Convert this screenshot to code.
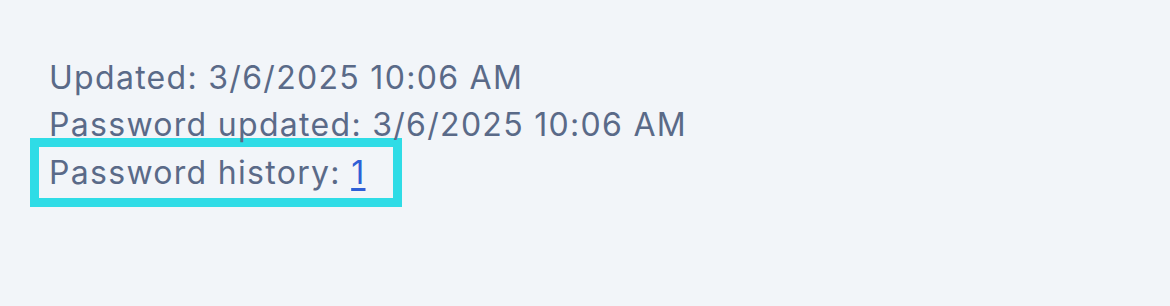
export default function App() {
  return (
    <div className="min-h-[306px] w-full bg-[#f2f5f9] pl-[49px] pt-[54px] font-['Inter',sans-serif] text-[32px] leading-[47px] tracking-[1.3px] text-[#5a6a88]">
      <div>Updated: 3/6/2025 10:06 AM</div>
      <div>Password updated: 3/6/2025 10:06 AM</div>
      <div className="-ml-[19px] -mt-[10px] w-[372px] border-[9px] border-[#2fdce6] pb-[2px] pl-[10px] pt-[2px]">
        Password history:{' '}
        <a href="#" className="text-[#2f5fd6] underline underline-offset-4">1</a>
      </div>
    </div>
  )
}
